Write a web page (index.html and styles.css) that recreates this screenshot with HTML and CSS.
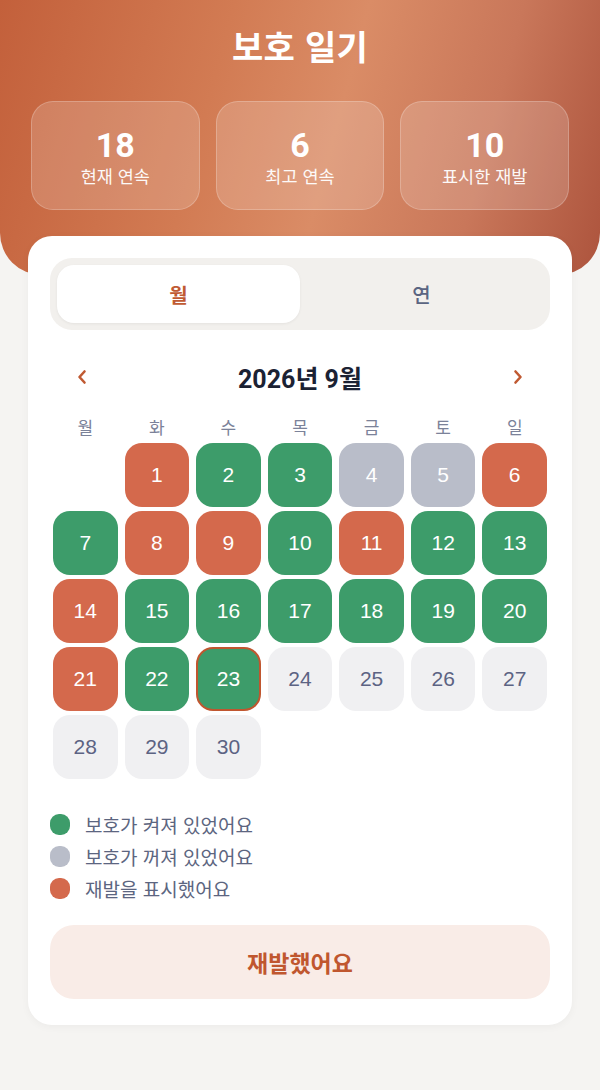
FILE: index.html
```html
<!DOCTYPE html>
<html lang="ko">
<head>
<meta charset="utf-8">
<title>보호 일기</title>
<link rel="stylesheet" href="styles.css">
</head>
<body>
<header class="hero">
  <h1 class="title">보호 일기</h1>
  <div class="stats">
    <div class="stat"><div class="stat-num">18</div><div class="stat-label">현재 연속</div></div>
    <div class="stat"><div class="stat-num">6</div><div class="stat-label">최고 연속</div></div>
    <div class="stat"><div class="stat-num">10</div><div class="stat-label">표시한 재발</div></div>
  </div>
</header>
<main class="card">
  <div class="seg">
    <div class="seg-item active">월</div>
    <div class="seg-item">연</div>
  </div>
  <div class="nav">
    <span class="arrow"><svg width="12" height="16" viewBox="0 0 12 16"><path d="M8.5 2.5 L3.5 8 L8.5 13.5" fill="none" stroke="#c05a32" stroke-width="2.6" stroke-linecap="round" stroke-linejoin="round"/></svg></span>
    <span class="month">2026년 9월</span>
    <span class="arrow"><svg width="12" height="16" viewBox="0 0 12 16"><path d="M3.5 2.5 L8.5 8 L3.5 13.5" fill="none" stroke="#c05a32" stroke-width="2.6" stroke-linecap="round" stroke-linejoin="round"/></svg></span>
  </div>
  <div class="weekdays">
    <span>월</span><span>화</span><span>수</span><span>목</span><span>금</span><span>토</span><span>일</span>
  </div>
  <div class="grid">
    <div class="cell blank"></div>
    <div class="cell red">1</div>
    <div class="cell green">2</div>
    <div class="cell green">3</div>
    <div class="cell gray">4</div>
    <div class="cell gray">5</div>
    <div class="cell red">6</div>
    <div class="cell green">7</div>
    <div class="cell red">8</div>
    <div class="cell red">9</div>
    <div class="cell green">10</div>
    <div class="cell red">11</div>
    <div class="cell green">12</div>
    <div class="cell green">13</div>
    <div class="cell red">14</div>
    <div class="cell green">15</div>
    <div class="cell green">16</div>
    <div class="cell green">17</div>
    <div class="cell green">18</div>
    <div class="cell green">19</div>
    <div class="cell green">20</div>
    <div class="cell red">21</div>
    <div class="cell green">22</div>
    <div class="cell green today">23</div>
    <div class="cell future">24</div>
    <div class="cell future">25</div>
    <div class="cell future">26</div>
    <div class="cell future">27</div>
    <div class="cell future">28</div>
    <div class="cell future">29</div>
    <div class="cell future">30</div>
  </div>
  <ul class="legend">
    <li><span class="dot dot-green"></span>보호가 켜져 있었어요</li>
    <li><span class="dot dot-gray"></span>보호가 꺼져 있었어요</li>
    <li><span class="dot dot-red"></span>재발을 표시했어요</li>
  </ul>
  <button class="relapse">재발했어요</button>
</main>
</body>
</html>
```

FILE: styles.css
```css
* { box-sizing: border-box; }
html, body { margin: 0; padding: 0; }
body {
  background: #f5f4f2;
  font-family: "Noto Sans CJK KR", "Noto Sans", sans-serif;
  width: 600px;
  min-height: 1090px;
}
.hero {
  height: 275px;
  padding: 24px 31px 0;
  border-radius: 0 0 42px 42px;
  background: linear-gradient(105deg, #c3603b 0%, #d27b53 35%, #da8c66 55%, #c9775a 78%, #ad543d 100%);
}
.title {
  margin: 0;
  text-align: center;
  color: #fff;
  font-size: 34px;
  font-weight: 700;
  line-height: 44px;
  letter-spacing: 0.3px;
}
.stats {
  margin-top: 33px;
  display: grid;
  grid-template-columns: repeat(3, 1fr);
  gap: 16px;
}
.stat {
  height: 109px;
  border-radius: 22px;
  background: rgba(255, 255, 255, 0.17);
  border: 1px solid rgba(255, 255, 255, 0.22);
  display: flex;
  flex-direction: column;
  align-items: center;
  justify-content: center;
  color: #fff;
}
.stat-num {
  font-family: Roboto, "Liberation Sans", sans-serif;
  font-size: 34px;
  font-weight: 700;
  line-height: 38px;
  margin-top: 2px;
}
.stat-label {
  font-size: 17.5px;
  line-height: 24px;
  opacity: 0.95;
}
.card {
  display: block;
  margin: -39px 28px 0;
  background: #fff;
  border-radius: 24px;
  padding: 22px 22px 26px;
  box-shadow: 0 2px 8px rgba(0, 0, 0, 0.04);
}
.seg {
  height: 72px;
  background: #f2f0ed;
  border-radius: 22px;
  padding: 7px;
  display: grid;
  grid-template-columns: 1fr 1fr;
}
.seg-item {
  display: flex;
  align-items: center;
  justify-content: center;
  font-size: 20px;
  font-weight: 500;
  color: #5b6582;
  border-radius: 17px;
}
.seg-item.active {
  background: #fff;
  color: #c05a32;
  font-weight: 700;
  box-shadow: 0 1px 3px rgba(0, 0, 0, 0.06);
}
.nav {
  margin-top: 24px;
  height: 46px;
  display: flex;
  align-items: center;
  justify-content: space-between;
  padding: 0 26px 0 26px;
}
.arrow { display: flex; width: 12px; }
.month {
  font-family: Roboto, "Noto Sans CJK KR", sans-serif;
  font-size: 25px;
  font-weight: 700;
  color: #1b2233;
}
.weekdays {
  margin-top: 15px;
  display: grid;
  grid-template-columns: repeat(7, 1fr);
  column-gap: 7px;
  padding: 0 3px;
  height: 24px;
  line-height: 24px;
  text-align: center;
  font-size: 17px;
  color: #7b8299;
}
.grid {
  margin-top: 4px;
  display: grid;
  grid-template-columns: repeat(7, 1fr);
  column-gap: 7px;
  row-gap: 4.5px;
  padding: 0 3px;
}
.cell {
  height: 63.5px;
  border-radius: 17px;
  display: flex;
  align-items: center;
  justify-content: center;
  font-family: "Liberation Sans", Arial, sans-serif;
  font-size: 21px;
  color: #fff;
}
.cell.blank { background: transparent; }
.cell.red { background: #d4694c; }
.cell.green { background: #3d9c6a; }
.cell.gray { background: #b9bdc9; }
.cell.future { background: #f0f0f2; color: #5c6383; }
.cell.today { border: 2.5px solid #c0562f; }
.legend {
  list-style: none;
  margin: 30px 0 0;
  padding: 0;
}
.legend li {
  display: flex;
  align-items: center;
  height: 32px;
  font-size: 19px;
  color: #5c6580;
}
.dot {
  width: 20px;
  height: 21px;
  border-radius: 9px;
  margin-right: 15px;
  flex: none;
}
.dot-green { background: #3d9c6a; }
.dot-gray { background: #b9bdc9; }
.dot-red { background: #d4694c; }
.relapse {
  display: block;
  width: 100%;
  margin-top: 20px;
  height: 74px;
  border: none;
  border-radius: 24px;
  background: #f9ece7;
  color: #c0572f;
  font-family: "Noto Sans CJK KR", sans-serif;
  font-size: 23px;
  font-weight: 700;
}
```
